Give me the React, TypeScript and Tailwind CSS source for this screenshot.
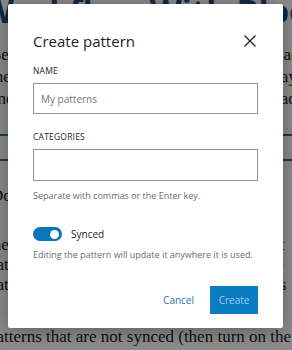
import { useState } from 'react';

const bodyLines = [
  'Begin by building the pattern in the editor, adding blocks,',
  'then set up the layout so that it looks the way you want',
  'and the text flows as you expect it to for readers of the',
];

function Toggle({ on, onChange }: { on: boolean; onChange: () => void }) {
  return (
    <button
      type="button"
      onClick={onChange}
      className={`flex h-[14px] w-[29px] items-center rounded-full px-[3px] ${on ? 'justify-end bg-[#0a75b8]' : 'justify-start bg-[#949494]'}`}
    >
      <span className="block h-[9px] w-[9px] rounded-full bg-white" />
    </button>
  );
}

export default function App() {
  const [synced, setSynced] = useState(true);
  const [name, setName] = useState('');
  const [cats, setCats] = useState('');

  return (
    <div className="relative h-[350px] w-[292px] overflow-hidden bg-white">
      {/* page behind the modal */}
      <div className="flex flex-col">
        <h1 className="ml-[-18px] mt-[-9px] whitespace-nowrap font-['Open_Sans',sans-serif] text-[33px] font-bold leading-[40px] text-[#1e4f80]">
          Workflow With Blocks
        </h1>
        <div className="ml-[-10px] mt-[13px] flex flex-col whitespace-nowrap font-['Liberation_Serif',serif] text-[17px] leading-[22px] text-[#1a1a1a]">
          {bodyLines.map((l) => (
            <p key={l}>{l}</p>
          ))}
        </div>
        <div className="mt-[24px] h-[2px] bg-[#2a6aa8]" />
        <div className="mt-[23px] h-[2px] bg-[#2a6aa8]" />
        <div className="ml-[-9px] mt-[24px] whitespace-nowrap font-['Liberation_Serif',serif] text-[17px] leading-[22px] text-[#1a1a1a]">
          Docs for reusable blocks with the editor h
        </div>
        <div className="ml-[-12px] mt-[28px] flex flex-col whitespace-nowrap font-['Liberation_Serif',serif] text-[17px] leading-[20px] text-[#1a1a1a]">
          <p>the same design across your site, and it is st</p>
          <p>pattern changes are reflected everywhere, o</p>
          <p>patterns are a great way to handle sections s</p>
        </div>
        <div className="ml-[-12px] mt-[31px] whitespace-nowrap font-['Liberation_Serif',serif] text-[17px] leading-[22px] text-[#1a1a1a]">
          patterns that are not synced (then turn on the
        </div>
      </div>

      {/* overlay */}
      <div className="absolute inset-0 bg-black/45" />

      {/* modal */}
      <div className="absolute left-[8px] top-[4px] flex h-[324px] w-[275px] flex-col rounded-[2px] bg-white px-[25px] pt-[24px] font-['Open_Sans',sans-serif] shadow-[0_3px_20px_rgba(0,0,0,0.35)]">
        <div className="flex items-center justify-between">
          <h2 className="text-[15px] leading-[26px] text-[#1e1e1e]">Create pattern</h2>
          <button type="button" className="mr-[-2px] flex h-[20px] w-[20px] items-center justify-center text-[#1e1e1e]">
            <svg width="14" height="14" viewBox="0 0 14 14" fill="none" stroke="currentColor" strokeWidth="1.2">
              <path d="M1.5 1.5 L12.5 12.5 M12.5 1.5 L1.5 12.5" />
            </svg>
          </button>
        </div>

        <label className="mt-[11px] text-[8.5px] uppercase leading-[12px] tracking-[0.2px] text-[#1e1e1e]">Name</label>
        <input
          value={name}
          onChange={(e) => setName(e.target.value)}
          placeholder="My patterns"
          className="mt-[6px] h-[31px] w-full border border-[#949494] px-[7px] text-[10px] text-[#1e1e1e] outline-none placeholder:text-[#757575]"
        />

        <label className="mt-[17px] text-[8.5px] uppercase leading-[12px] tracking-[0.2px] text-[#1e1e1e]">Categories</label>
        <input
          value={cats}
          onChange={(e) => setCats(e.target.value)}
          className="mt-[6px] h-[32px] w-full border border-[#949494] px-[7px] text-[10px] text-[#1e1e1e] outline-none"
        />
        <p className="mt-[8px] text-[9px] leading-[13px] text-[#6b6b6b]">Separate with commas or the Enter key.</p>

        <div className="mt-[25px] flex items-center gap-[9px]">
          <Toggle on={synced} onChange={() => setSynced(!synced)} />
          <span className="text-[10px] leading-[14px] text-[#1e1e1e]">Synced</span>
        </div>
        <p className="mt-[7px] whitespace-nowrap text-[9px] leading-[13px] text-[#6b6b6b]">
          Editing the pattern will update it anywhere it is used.
        </p>

        <div className="mt-[25px] flex items-center justify-end gap-[10px]">
          <button type="button" className="h-[28px] px-[6px] text-[10px] text-[#2a78b3]">
            Cancel
          </button>
          <button type="button" className="h-[28px] w-[48px] bg-[#0a7cc1] text-[10px] text-[#9fd0ee]">
            Create
          </button>
        </div>
      </div>
    </div>
  );
}
